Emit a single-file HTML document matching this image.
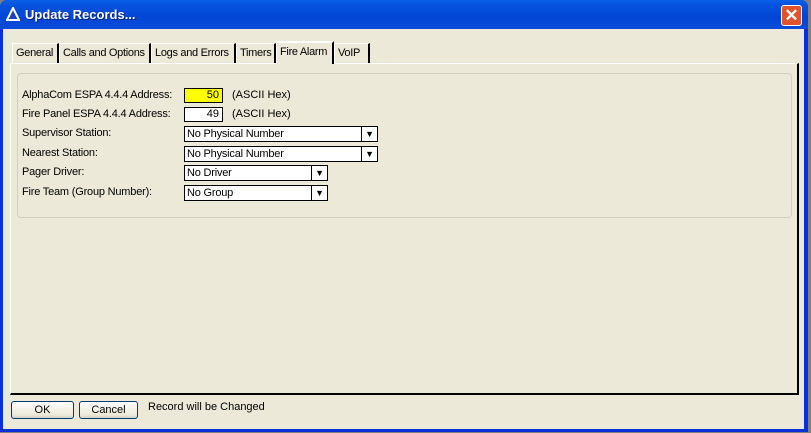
<!DOCTYPE html>
<html><head><style>
*{margin:0;padding:0;box-sizing:border-box}
body{width:811px;height:433px;overflow:hidden;background:#808080;font-family:"Liberation Sans",sans-serif;font-size:11px;color:#000;position:relative}
.win{position:absolute;left:0;top:0;width:808px;height:432px;background:#0831d9;border-radius:7px 7px 0 0}
.title{position:absolute;left:0;top:0;width:808px;height:29px;background:linear-gradient(#0a5fe8,#0552de 20%,#0345d6 60%,#0a4bd9);border-radius:7px 7px 0 0}
.title span{position:absolute;left:25px;top:7px;color:#fff;font-weight:bold;font-size:13px;text-shadow:1px 1px #0a1e7a}
.close{position:absolute;left:781px;top:5px;width:21px;height:21px;background:#e0532b;border:1px solid #fff;border-radius:3px;color:#fff;font-size:17px;font-weight:bold;text-align:center;line-height:19px}
.client{position:absolute;left:3px;top:29px;width:801px;height:400px;background:#ece9d8}
.abs{position:absolute}
.tab{position:absolute;top:14px;height:20px;border:1px solid #fff;border-right:2px solid #000;border-bottom:none;padding:3px 0 0 3px;white-space:nowrap;letter-spacing:-0.3px;overflow:hidden}
.panel{position:absolute;left:7px;top:34px;width:789px;height:332px;border:1px solid #fff;border-right:2px solid #000;border-bottom:2px solid #000}
.grp{position:absolute;left:6px;top:9px;width:775px;height:145px;border:1px solid #d0d0bf;border-radius:4px}
.lbl{position:absolute;left:19px;letter-spacing:-0.2px}
.inp{position:absolute;height:15px;border:1px solid #000;background:#fff;text-align:right;padding-right:3px;line-height:13px}
.cb{position:absolute;height:16px;border:1px solid #000;background:#fff;padding-left:2px;line-height:14px;letter-spacing:-0.2px}
.cb i{position:absolute;right:0;top:0;width:16px;height:14px;border-left:1px solid #000;font-style:normal;font-size:9px;text-align:center;line-height:14px}
.btn{position:absolute;top:372px;height:18px;border:1px solid #003c74;border-radius:3px;background:linear-gradient(#fff,#ece9d8 80%,#d6d0c5);text-align:center;line-height:16px}
</style></head><body>
<div class="win">
<div class="title"><svg class="abs" style="left:6px;top:7px" width="14" height="14"><polygon points="7,1 13,13 1,13" fill="none" stroke="#fff" stroke-width="2"/><polygon points="7,4 11,12 3,12" fill="#2040c0"/></svg><span>Update Records...</span><div class="close">✕</div></div>
<div class="client">
<div class="tab" style="left:9px;width:47px">General</div>
<div class="tab" style="left:56px;width:92px">Calls and Options</div>
<div class="tab" style="left:148px;width:85px">Logs and Errors</div>
<div class="tab" style="left:233px;width:40px">Timers</div>
<div class="panel">
<div class="grp"></div>
</div>
<div class="tab" style="left:273px;top:12px;height:23px;width:58px;background:#ece9d8;border-top:2px solid #fff">Fire Alarm</div>
<div class="tab" style="left:331px;width:36px">VoIP</div>
<div class="lbl" style="top:60px">AlphaCom ESPA 4.4.4 Address:</div>
<div class="lbl" style="top:79px">Fire Panel ESPA 4.4.4 Address:</div>
<div class="lbl" style="top:98px">Supervisor Station:</div>
<div class="lbl" style="top:118px">Nearest Station:</div>
<div class="lbl" style="top:137px">Pager Driver:</div>
<div class="lbl" style="top:157px">Fire Team (Group Number):</div>
<div class="inp" style="left:181px;top:59px;width:39px;background:#ffff00">50</div>
<div class="inp" style="left:181px;top:78px;width:39px">49</div>
<div class="abs" style="left:229px;top:60px">(ASCII Hex)</div>
<div class="abs" style="left:229px;top:79px">(ASCII Hex)</div>
<div class="cb" style="left:181px;top:97px;width:194px">No Physical Number<i>▼</i></div>
<div class="cb" style="left:181px;top:117px;width:194px">No Physical Number<i>▼</i></div>
<div class="cb" style="left:181px;top:136px;width:144px">No Driver<i>▼</i></div>
<div class="cb" style="left:181px;top:156px;width:144px">No Group<i>▼</i></div>
<div class="btn" style="left:8px;width:63px">OK</div>
<div class="btn" style="left:76px;width:59px">Cancel</div>
<div class="abs" style="left:145px;top:372px">Record will be Changed</div>
</div>
</div>
</body></html>
